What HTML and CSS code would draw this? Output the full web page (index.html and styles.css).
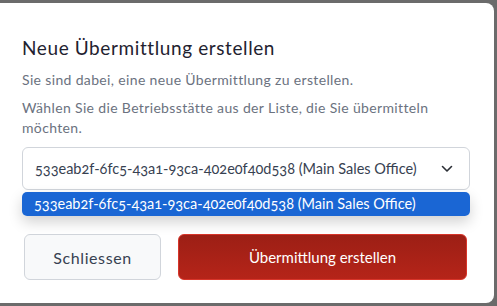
FILE: index.html
```html
<!DOCTYPE html>
<html lang="de">
<head>
  <meta charset="UTF-8" />
  <meta name="viewport" content="width=device-width, initial-scale=1.0"/>
  <title>Neue Übermittlung</title>
  <link rel="stylesheet" href="styles.css">
</head>
<body>
  <div class="modal">
    <h2 class="title">Neue Übermittlung erstellen</h2>
    <p class="lead">Sie sind dabei, eine neue Übermittlung zu erstellen.</p>
    <p class="hint">Wählen Sie die Betriebsstätte aus der Liste, die Sie übermitteln möchten.</p>

    <div class="select">
      <span class="select-value">533eab2f-6fc5-43a1-93ca-402e0f40d538 (Main Sales Office)</span>
      <svg class="chevron" width="12" height="8" viewBox="0 0 12 8">
        <path d="M1.5 1.5 L6 6 L10.5 1.5" fill="none" stroke="#2b2f36" stroke-width="1.6" stroke-linecap="round" stroke-linejoin="round"/>
      </svg>
      <div class="options">
        <div class="option selected">533eab2f-6fc5-43a1-93ca-402e0f40d538 (Main Sales Office)</div>
      </div>
    </div>

    <div class="actions">
      <button class="btn btn-secondary">Schliessen</button>
      <button class="btn btn-primary">Übermittlung erstellen</button>
    </div>
  </div>
</body>
</html>
```

FILE: styles.css
```css
body {
  margin: 0;
  background-color: #6b6b6b;
  font-family: Lato, "Open Sans", sans-serif;
  font-variant-numeric: oldstyle-nums;
  color: #1f2230;
}

.modal {
  margin-top: 3px;
  width: 494px;
  height: 300px;
  box-sizing: border-box;
  background-color: #fff;
  border-radius: 0 8px 8px 0;
  padding: 33px 24px 0 22px;
}

.title {
  margin: 0;
  font-size: 19px;
  line-height: 24px;
  font-weight: 400;
  letter-spacing: 0.6px;
  color: #1f2230;
}

.lead,
.hint {
  margin: 10px 0 0;
  font-size: 14px;
  line-height: 20px;
  letter-spacing: 0.35px;
  color: #6b7280;
}

.hint {
  margin-top: 8px;
}

.select {
  position: relative;
  margin-top: 9px;
  height: 43px;
  box-sizing: border-box;
  border: 1px solid #d1d5db;
  border-radius: 6px;
  display: flex;
  align-items: center;
  justify-content: space-between;
  padding: 0 16px 0 12px;
  font-size: 14.5px;
  color: #374151;
}

.chevron {
  display: block;
}

.options {
  position: absolute;
  left: -1px;
  right: -1px;
  top: 44px;
  border-radius: 5px;
  box-shadow: 0 6px 14px rgba(0, 0, 0, 0.18);
}

.option {
  height: 24px;
  line-height: 24px;
  padding: 0 12px;
  border-radius: 5px;
  font-size: 14.5px;
}

.option.selected {
  background-color: #1a66d4;
  color: #fff;
}

.actions {
  display: flex;
  gap: 17px;
  margin: 44px 3px 0 2px;
}

.btn {
  height: 46px;
  border-radius: 6px;
  font-family: inherit;
  font-size: 16px;
  cursor: pointer;
}

.btn-secondary {
  width: 137px;
  background-color: #f8f9fa;
  border: 1px solid #d1d5db;
  color: #374151;
  letter-spacing: 0.6px;
}

.btn-primary {
  flex: 1;
  background: linear-gradient(#9c1f15, #b52419);
  border: 1px solid #d8352a;
  color: #fff;
  font-size: 15px;
}
```
